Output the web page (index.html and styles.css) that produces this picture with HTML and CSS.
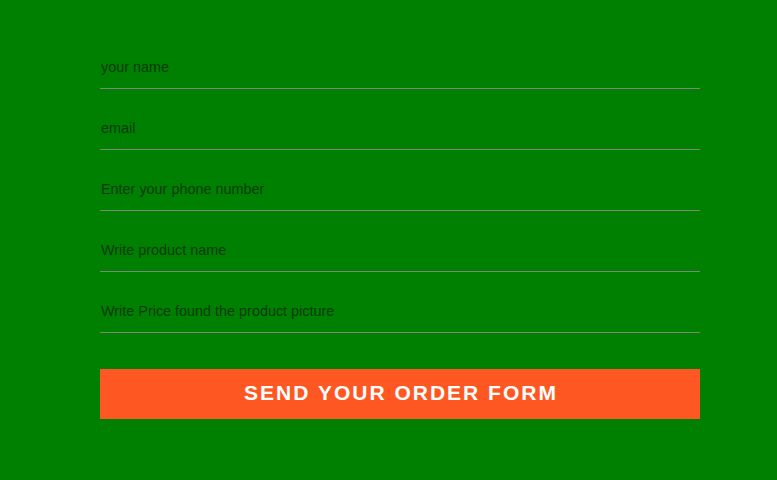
FILE: index.html
```html
<!DOCTYPE html>
<html>
<head>
<meta charset="utf-8">
<link rel="stylesheet" href="styles.css">
</head>
<body>
<form class="order-form">
  <input class="field" type="text" placeholder="your name">
  <input class="field" type="email" placeholder="email">
  <input class="field" type="text" placeholder="Enter your phone number">
  <input class="field" type="text" placeholder="Write product name">
  <input class="field" type="text" placeholder="Write Price found the product picture">
  <button class="submit" type="button">Send your order form</button>
</form>
</body>
</html>
```

FILE: styles.css
```css
html, body {
  margin: 0;
  padding: 0;
  background: #008000;
  height: 100%;
}
body {
  font-family: "Liberation Sans", Arial, sans-serif;
}
.order-form {
  width: 600px;
  margin-left: 100px;
  padding-top: 48px;
  display: flex;
  flex-direction: column;
  gap: 20px;
}
.field {
  display: block;
  box-sizing: border-box;
  width: 600px;
  height: 41px;
  margin: 0;
  padding: 0 1px 2px;
  border: 0;
  border-bottom: 1px solid #7a8a7a;
  background: transparent;
  font-family: "Liberation Sans", Arial, sans-serif;
  font-size: 14.4px;
  color: #0b3a0b;
  outline: none;
}
.field::placeholder {
  color: #0b3a0b;
  opacity: 1;
}
.submit {
  margin-top: 16px;
  height: 50px;
  width: 600px;
  border: 0;
  background: #ff5722;
  color: #fff;
  font-family: "Liberation Sans", Arial, sans-serif;
  font-weight: bold;
  font-size: 21px;
  letter-spacing: 2px;
  text-transform: uppercase;
  padding: 0 0 2px 2px;
}
```
